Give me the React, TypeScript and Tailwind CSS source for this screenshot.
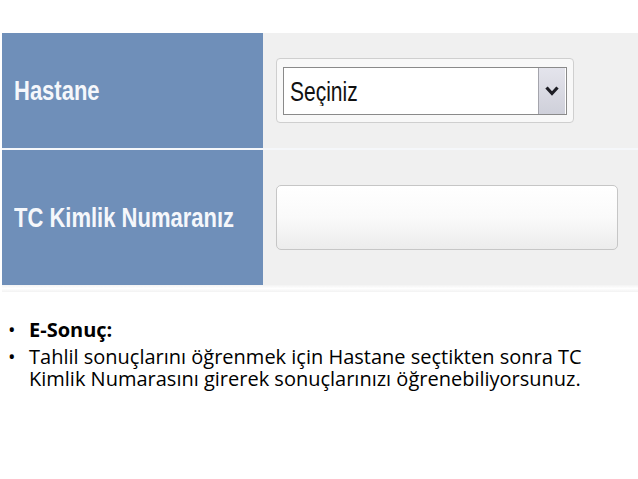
import React from "react";

export default function App() {
  return (
    <div className="w-[638px] h-[479px] bg-white overflow-hidden">
      <div className="pt-[33px] pl-[2px]">
        <FormRow height="h-[115px]" label="Hastane">
          <div className="w-[298px] h-[65px] rounded-[4px] border border-[#cfcfcf] bg-[#f8f8f8] flex items-center pl-[6px]">
            <div className="w-[284px] h-[48px] border border-[#8a8a8a] bg-white flex items-center">
              <span
                className="flex-1 pl-[6px] text-[21px] text-[#111] scale-y-[1.35] origin-center"
                style={{ fontFamily: "'Liberation Sans', Arial, sans-serif" }}
              >
                Seçiniz
              </span>
              <div className="w-[27px] h-[46px] mr-px bg-gradient-to-b from-[#e4e4ec] to-[#cfd0da] border-l border-[#a4a4ac] flex items-center justify-center">
                <svg width="14" height="12" viewBox="0 0 14 12">
                  <path
                    d="M1.5 2.5 L7 8.5 L12.5 2.5"
                    fill="none"
                    stroke="#1d1d24"
                    strokeWidth="3.2"
                  />
                </svg>
              </div>
            </div>
          </div>
        </FormRow>
        <div className="h-[2px] bg-[#f5f7fa]" />
        <FormRow height="h-[135px]" label="TC Kimlik Numaranız">
          <div className="w-[342px] h-[65px] rounded-[5px] border border-[#c6c6c6] bg-gradient-to-b from-white via-[#fafafa] to-[#ececec] shadow-[inset_0_1px_0_#ffffff]" />
        </FormRow>
        <div className="h-[7px] bg-gradient-to-b from-[#f3f3f3] via-white to-[#f2f2f2]" />
      </div>

      <ul
        className="mt-[26px] text-[20px] text-black"
        style={{ fontFamily: "'Open Sans', Lato, sans-serif" }}
      >
        <li className="flex leading-[24px]">
          <span className="w-[29px] pl-[8px] shrink-0">•</span>
          <span className="font-bold">E-Sonuç:</span>
        </li>
        <li className="flex leading-[22px] mt-[4px]">
          <span className="w-[29px] pl-[8px] shrink-0">•</span>
          <span className="flex flex-col whitespace-nowrap">
            <span>Tahlil sonuçlarını öğrenmek için Hastane seçtikten sonra TC</span>
            <span>Kimlik Numarasını girerek sonuçlarınızı öğrenebiliyorsunuz.</span>
          </span>
        </li>
      </ul>
    </div>
  );
}

function FormRow({
  height,
  label,
  children,
}: {
  height: string;
  label: string;
  children: React.ReactNode;
}) {
  return (
    <div className={`flex ${height}`}>
      <div className="w-[261px] bg-[#6f8fb9] flex items-center pl-[12px]">
        <span
          className="text-[22px] font-bold text-[#f5f7fb] scale-y-[1.28] whitespace-nowrap"
          style={{ fontFamily: "'Liberation Sans', Arial, sans-serif" }}
        >
          {label}
        </span>
      </div>
      <div className="flex-1 bg-[#f0f0f0] flex items-center pl-[13px]">
        {children}
      </div>
    </div>
  );
}
